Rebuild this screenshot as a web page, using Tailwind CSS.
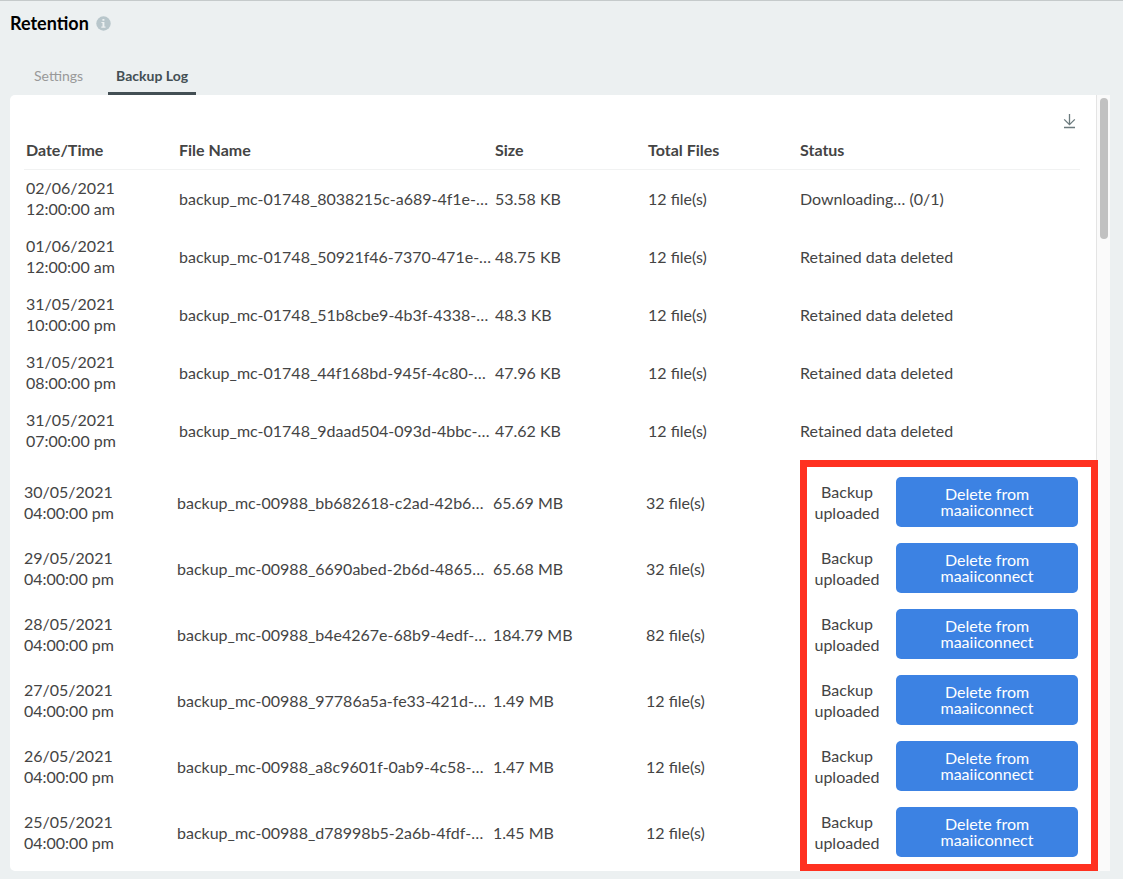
<!DOCTYPE html>
<html lang="en">
<head>
<meta charset="utf-8">
<meta name="viewport" content="width=device-width, initial-scale=1">
<title>Retention</title>
<script src="https://cdn.jsdelivr.net/npm/@tailwindcss/browser@4"></script>
</head>
<body class="min-h-screen border-t border-[#c5cacb] bg-[#ecf0f1] px-[10px] pb-2 font-['Lato',sans-serif] text-base text-[#444]">
<header class="flex items-center gap-[7px] pt-[10px]">
  <h1 class="text-lg leading-6 font-bold text-black">Retention</h1>
  <button type="button" aria-label="About retention" class="block">
    <svg width="15" height="15" viewBox="0 0 15 15" class="block"><circle cx="7.5" cy="7.5" r="7.2" fill="#b8c6cb"/><path d="M6.4 3h2v1.8h-2zM5.4 6h3v4.6h1.1v1.2H5.3v-1.2h1.2V7.1H5.4z" fill="#ecf0f1"/></svg>
  </button>
</header>
<nav class="mt-[22px] flex pl-[16px] text-sm leading-5">
  <a href="#settings" class="px-2 pt-[9px] pb-2 text-[#999]">Settings</a>
  <a href="#log" aria-current="page" class="ml-[17px] rounded-t-[3px] border-b-[3px] border-[#434f54] px-2 pt-[9px] pb-[6px] font-bold text-[#434f54]">Backup Log</a>
</nav>
<main id="log" class="mr-[3px] flex rounded-l-[5px] bg-white">
  <section class="min-w-0 flex-1 pr-4 pb-[6px] pl-[14px]">
    <div class="flex justify-end pt-[18px] pr-1">
      <button type="button" aria-label="Download log" class="block">
        <svg width="13" height="16" viewBox="0 0 13 16" fill="none" stroke="#6b7a7d" stroke-width="1.3" class="block"><path d="M6.5 1v10.6M1.2 6.4l5.3 5.2 5.3-5.2M1 14.5h11"/></svg>
      </button>
    </div>
    <table class="w-full table-fixed text-left leading-[21px]">
      <colgroup><col class="w-[153px]"><col class="w-[316px]"><col class="w-[153px]"><col class="w-[152px]"><col></colgroup>
      <thead class="[&_th]:h-10 [&_th]:border-b [&_th]:border-[#f1f2f2] [&_th]:pt-px [&_th]:pl-[2px] [&_th]:font-bold">
        <tr><th>Date/Time</th><th>File Name</th><th>Size</th><th>Total Files</th><th>Status</th></tr>
      </thead>
      <tbody class="[&_td]:h-[58px] [&_td]:pl-[2px]">
        <tr><td>02/06/2021<br>12:00:00 am</td><td class="whitespace-nowrap">backup_mc-01748_8038215c-a689-4f1e-…</td><td>53.58 KB</td><td>12 file(s)</td><td>Downloading… (0/1)</td></tr>
        <tr><td>01/06/2021<br>12:00:00 am</td><td class="whitespace-nowrap">backup_mc-01748_50921f46-7370-471e-…</td><td>48.75 KB</td><td>12 file(s)</td><td>Retained data deleted</td></tr>
        <tr><td>31/05/2021<br>10:00:00 pm</td><td class="whitespace-nowrap">backup_mc-01748_51b8cbe9-4b3f-4338-…</td><td>48.3 KB</td><td>12 file(s)</td><td>Retained data deleted</td></tr>
        <tr><td>31/05/2021<br>08:00:00 pm</td><td class="whitespace-nowrap">backup_mc-01748_44f168bd-945f-4c80-…</td><td>47.96 KB</td><td>12 file(s)</td><td>Retained data deleted</td></tr>
        <tr><td>31/05/2021<br>07:00:00 pm</td><td class="whitespace-nowrap">backup_mc-01748_9daad504-093d-4bbc-…</td><td>47.62 KB</td><td>12 file(s)</td><td>Retained data deleted</td></tr>
      </tbody>
      <tbody aria-hidden="true"><tr class="h-[10px]"><td colspan="5"></td></tr></tbody>
      <tbody class="relative [&_button]:h-[50px] [&_button]:w-[182px] [&_button]:shrink-0 [&_button]:rounded-[5px] [&_button]:bg-[#3c82e3] [&_button]:px-8 [&_button]:leading-4 [&_button]:text-white [&_td]:h-[66px]">
        <tr><td>30/05/2021<br>04:00:00 pm</td><td class="whitespace-nowrap">backup_mc-00988_bb682618-c2ad-42b6…</td><td>65.69 MB</td><td>32 file(s)</td>
          <td><div class="flex items-center justify-end gap-4 pr-[2px]"><span class="w-[66px] text-center">Backup uploaded</span><button type="button">Delete from maaiiconnect</button></div>
          <div class="pointer-events-none absolute -top-[9px] -right-[18px] -bottom-[6px] left-[776px] border-[7px] border-[#ff3120]"></div></td></tr>
        <tr><td>29/05/2021<br>04:00:00 pm</td><td class="whitespace-nowrap">backup_mc-00988_6690abed-2b6d-4865…</td><td>65.68 MB</td><td>32 file(s)</td>
          <td><div class="flex items-center justify-end gap-4 pr-[2px]"><span class="w-[66px] text-center">Backup uploaded</span><button type="button">Delete from maaiiconnect</button></div></td></tr>
        <tr><td>28/05/2021<br>04:00:00 pm</td><td class="whitespace-nowrap">backup_mc-00988_b4e4267e-68b9-4edf-…</td><td>184.79 MB</td><td>82 file(s)</td>
          <td><div class="flex items-center justify-end gap-4 pr-[2px]"><span class="w-[66px] text-center">Backup uploaded</span><button type="button">Delete from maaiiconnect</button></div></td></tr>
        <tr><td>27/05/2021<br>04:00:00 pm</td><td class="whitespace-nowrap">backup_mc-00988_97786a5a-fe33-421d-…</td><td>1.49 MB</td><td>12 file(s)</td>
          <td><div class="flex items-center justify-end gap-4 pr-[2px]"><span class="w-[66px] text-center">Backup uploaded</span><button type="button">Delete from maaiiconnect</button></div></td></tr>
        <tr><td>26/05/2021<br>04:00:00 pm</td><td class="whitespace-nowrap">backup_mc-00988_a8c9601f-0ab9-4c58-…</td><td>1.47 MB</td><td>12 file(s)</td>
          <td><div class="flex items-center justify-end gap-4 pr-[2px]"><span class="w-[66px] text-center">Backup uploaded</span><button type="button">Delete from maaiiconnect</button></div></td></tr>
        <tr><td>25/05/2021<br>04:00:00 pm</td><td class="whitespace-nowrap">backup_mc-00988_d78998b5-2a6b-4fdf-…</td><td>1.45 MB</td><td>12 file(s)</td>
          <td><div class="flex items-center justify-end gap-4 pr-[2px]"><span class="w-[66px] text-center">Backup uploaded</span><button type="button">Delete from maaiiconnect</button></div></td></tr>
      </tbody>
    </table>
  </section>
  <div class="w-[14px] shrink-0 border-l border-[#e4e4e4] bg-[#fafafa] pt-[3px] pl-[3px]" aria-hidden="true">
    <div class="h-[141px] w-2 rounded-full bg-[#c1c1c1]"></div>
  </div>
</main>
</body>
</html>
